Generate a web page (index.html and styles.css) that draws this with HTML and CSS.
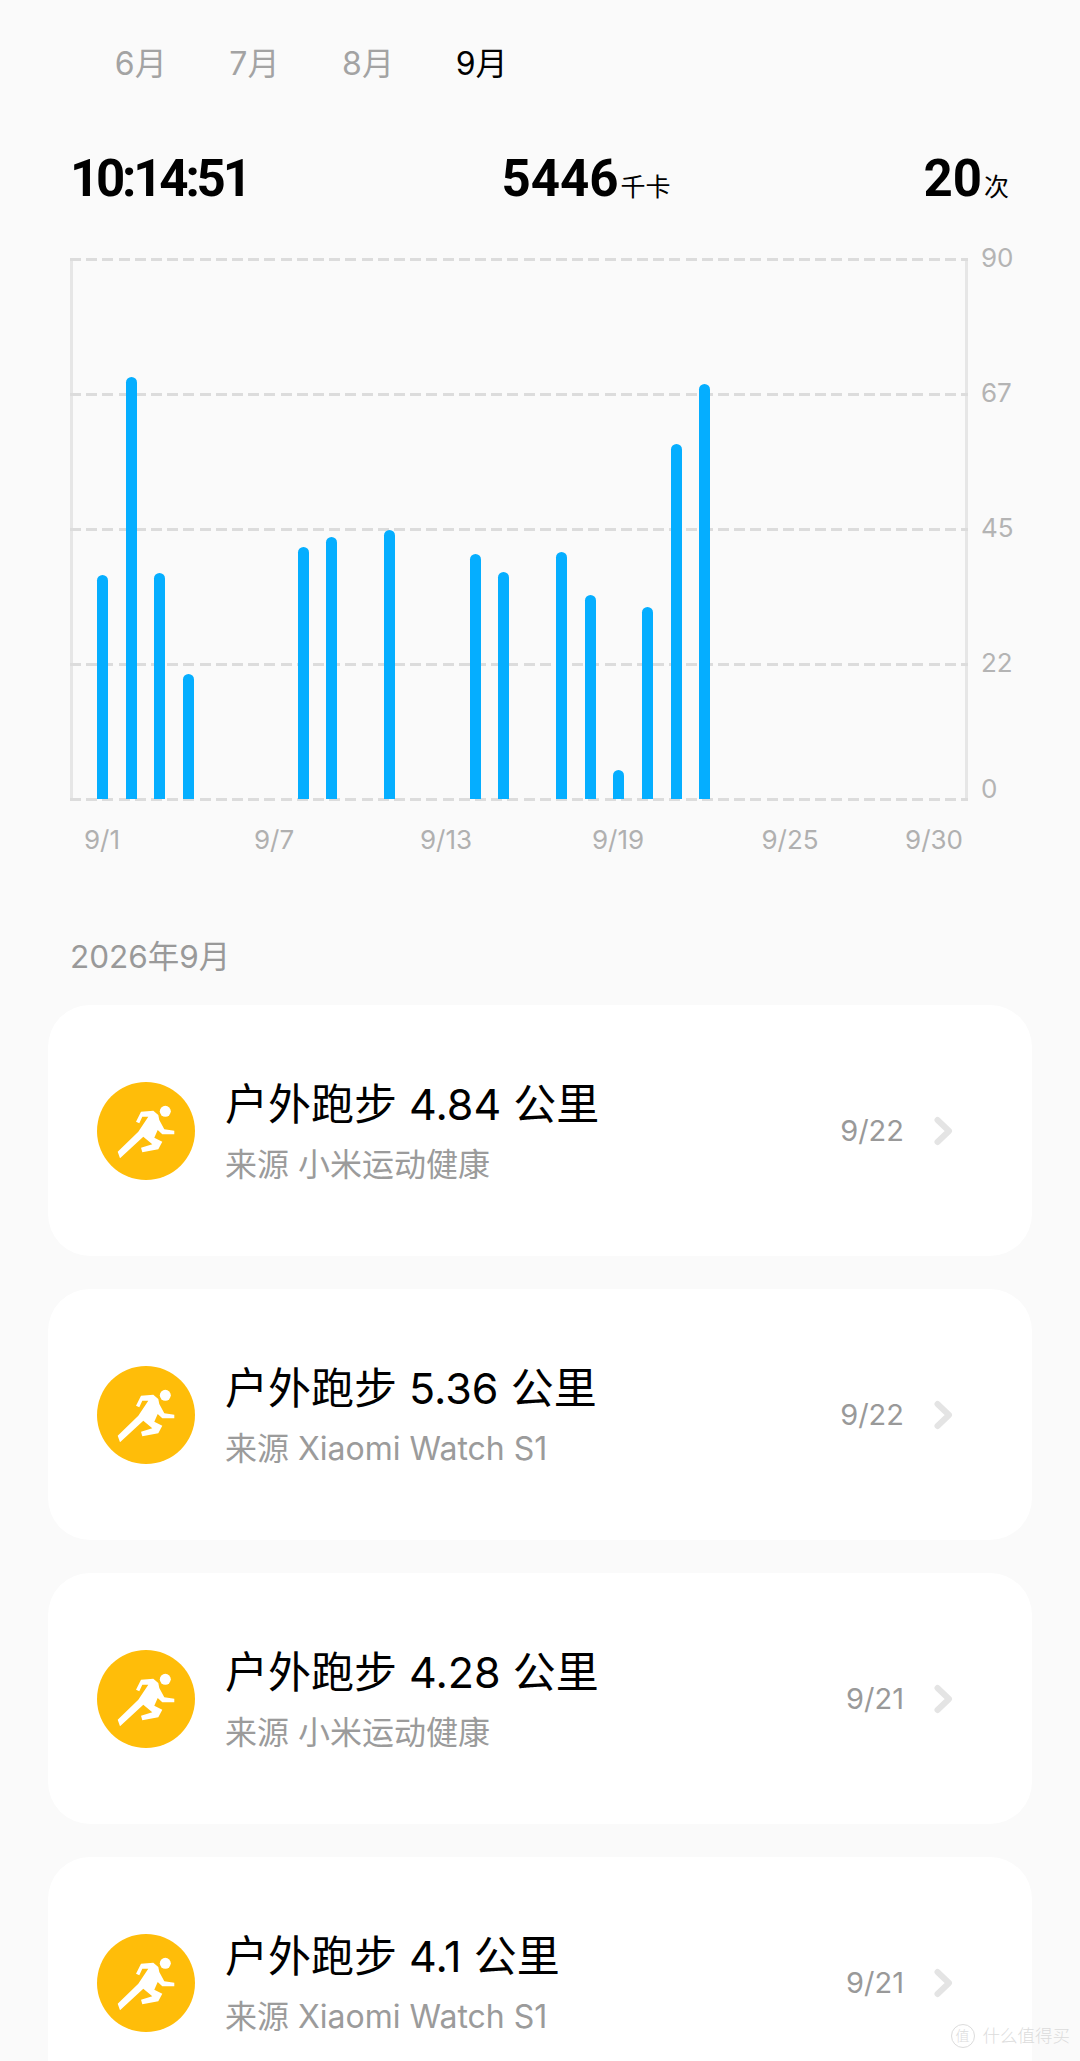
FILE: index.html
```html
<!DOCTYPE html>
<html lang="zh-CN">
<head>
    <meta charset="UTF-8">
    <meta name="viewport" content="width=device-width, initial-scale=1.0">
    <title>运动记录</title>
    <link rel="stylesheet" href="styles.css">
</head>
<body>
    <div class="page">
        <div class="tabs">
            <span class="tab">6月</span>
            <span class="tab">7月</span>
            <span class="tab">8月</span>
            <span class="tab active">9月</span>
        </div>

        <div class="totals">
            <div class="total"><b class="time">10:14:51</b></div>
            <div class="total"><b>5446</b><small>千卡</small></div>
            <div class="total"><b>20</b><small>次</small></div>
        </div>

        <div class="chart">
            <div class="plot">
                <div class="grid">
                    <i></i><i></i><i></i><i></i><i></i>
                </div>
                <div class="bars" id="bars"></div>
            </div>
            <div class="y-axis">
                <span>90</span><span>67</span><span>45</span><span>22</span><span class="zero">0</span>
            </div>
        </div>
        <div class="x-axis">
            <span style="left:32px">9/1</span>
            <span style="left:204px">9/7</span>
            <span style="left:376px">9/13</span>
            <span style="left:548px">9/19</span>
            <span style="left:720px">9/25</span>
            <span style="left:864px">9/30</span>
        </div>

        <h2 class="month">2026年9月</h2>

        <div class="list">
            <div class="card">
                <div class="badge">
                    <svg viewBox="0 0 98 98" width="98" height="98"><use href="#runner"/></svg>
                </div>
                <div class="info">
                    <div class="name">户外跑步 4.84 公里</div>
                    <div class="source">来源 小米运动健康</div>
                </div>
                <span class="date">9/22</span>
                <svg class="chevron" viewBox="0 0 20 30" width="20" height="30"><path d="M3.5 4L15 15 3.5 26"/></svg>
            </div>
            <div class="card">
                <div class="badge">
                    <svg viewBox="0 0 98 98" width="98" height="98"><use href="#runner"/></svg>
                </div>
                <div class="info">
                    <div class="name">户外跑步 5.36 公里</div>
                    <div class="source">来源 Xiaomi Watch S1</div>
                </div>
                <span class="date">9/22</span>
                <svg class="chevron" viewBox="0 0 20 30" width="20" height="30"><path d="M3.5 4L15 15 3.5 26"/></svg>
            </div>
            <div class="card">
                <div class="badge">
                    <svg viewBox="0 0 98 98" width="98" height="98"><use href="#runner"/></svg>
                </div>
                <div class="info">
                    <div class="name">户外跑步 4.28 公里</div>
                    <div class="source">来源 小米运动健康</div>
                </div>
                <span class="date">9/21</span>
                <svg class="chevron" viewBox="0 0 20 30" width="20" height="30"><path d="M3.5 4L15 15 3.5 26"/></svg>
            </div>
            <div class="card">
                <div class="badge">
                    <svg viewBox="0 0 98 98" width="98" height="98"><use href="#runner"/></svg>
                </div>
                <div class="info">
                    <div class="name">户外跑步 4.1 公里</div>
                    <div class="source">来源 Xiaomi Watch S1</div>
                </div>
                <span class="date">9/21</span>
                <svg class="chevron" viewBox="0 0 20 30" width="20" height="30"><path d="M3.5 4L15 15 3.5 26"/></svg>
            </div>
        </div>

        <div class="watermark"><span class="mark">值</span> 什么值得买</div>
    </div>

    <svg class="defs" width="0" height="0">
        <symbol id="runner" viewBox="0 0 98 98">
            <circle cx="68.3" cy="29.3" r="5.5" fill="#fff"/>
            <path fill="#fff" d="M39 39.7L44 29.7 56.3 28.7 61.3 33 62.3 38 67.3 47.3 77.3 48.7 77.3 52.3 65.3 52.3 60.7 48 57.3 55.7 65.3 59.7 61.3 67.3 45.3 70.3 44 65.7 55.3 62.3 46.3 54.7 23 76.3 20.7 69.7 41.3 49.7 51.3 34.7 45.3 34.7 42.3 41.3z"/>
        </symbol>
    </svg>

    <script>
        // day of month -> top of the bar in page px
        const tops = {1:575, 2:377, 3:573, 4:674, 8:547, 9:537, 11:530, 14:554, 15:572, 17:552, 18:595, 19:770, 20:607, 21:444, 22:384};
        const bars = document.getElementById('bars');
        for (let day = 1; day <= 30; day++) {
            const slot = document.createElement('div');
            slot.className = 'slot';
            if (tops[day]) {
                const bar = document.createElement('div');
                bar.className = 'bar';
                bar.style.height = (799 - tops[day]) + 'px';
                slot.appendChild(bar);
            }
            bars.appendChild(slot);
        }
    </script>
</body>
</html>
```
FILE: styles.css
```css
* {
    box-sizing: border-box;
}
html, body {
    margin: 0;
    height: 100%;
    overflow: hidden;
}
body {
    font-family: "Inter", "Noto Sans CJK SC", sans-serif;
    background-color: #fafafa;
    color: #000;
}
.page {
    position: relative;
    width: 1080px;
    height: 2061px;
    overflow: hidden;
}
.defs {
    position: absolute;
}

.tabs {
    display: flex;
    padding: 44px 0 0 84px;
    height: 130px;
}
.tab {
    width: 113.6px;
    text-align: center;
    font-size: 32px;
    line-height: 40px;
    height: 40px;
    color: #a3a3a3;
}
.tab.active {
    color: #000;
}

.totals {
    display: flex;
    justify-content: space-between;
    align-items: baseline;
    padding: 19px 71px 0 70px;
    height: 128px;
}
.total b {
    font-family: "Roboto", sans-serif;
    font-size: 51px;
    line-height: 60px;
    font-weight: 700;
}
.total .time {
    letter-spacing: -3.2px;
}
.total small {
    font-size: 25px;
    margin-left: 2px;
}

.chart {
    display: flex;
    padding-left: 70px;
}
.plot {
    position: relative;
    width: 898px;
    height: 543px;
    border-left: 3px solid #e6e6e6;
    border-right: 3px solid #e6e6e6;
}
.grid {
    position: absolute;
    inset: 0 -3px;
    display: flex;
    flex-direction: column;
    justify-content: space-between;
}
.grid i {
    display: block;
    height: 3px;
    background: repeating-linear-gradient(to right, #dcdcdc 0 11px, transparent 11px 16.2px);
}
.bars {
    position: absolute;
    left: 15px;
    bottom: 2px;
    height: 540px;
    display: flex;
    align-items: flex-end;
}
.slot {
    width: 28.7px;
    display: flex;
    justify-content: center;
}
.bar {
    width: 11px;
    background: #05aeff;
    border-radius: 6px 6px 0 0;
}
.y-axis {
    width: 60px;
    display: flex;
    flex-direction: column;
    gap: 105px;
    font-size: 26px;
    line-height: 30px;
    color: #b4b4b4;
    padding-left: 13px;
    margin-top: -15px;
}
.y-axis .zero {
    margin-top: -9px;
}

.x-axis {
    position: relative;
    height: 46px;
    margin-top: 19px;
    margin-left: 70px;
    font-size: 26px;
    line-height: 34px;
    color: #b0b0b0;
}
.x-axis span {
    position: absolute;
    top: 0;
    transform: translateX(-50%);
}

.month {
    margin: 0;
    padding: 68px 0 0 70px;
    height: 136px;
    font-size: 31.5px;
    line-height: 40px;
    font-weight: 400;
    color: #999;
}

.list {
    display: flex;
    flex-direction: column;
    gap: 33px;
    margin: 0 48px;
}
.card {
    flex: none;
    height: 251px;
    display: flex;
    align-items: center;
    padding: 0 78px 0 49px;
    background: #fff;
    border-radius: 42px;
}
.badge {
    flex: none;
    width: 98px;
    height: 98px;
    border-radius: 50%;
    background: #ffbd09;
}
.badge svg {
    display: block;
}
.info {
    flex: 1;
    margin-left: 30px;
}
.name {
    font-size: 43px;
    line-height: 56px;
    color: #000;
}
.source {
    font-size: 32px;
    line-height: 42px;
    margin-top: 12px;
    color: #9b9b9b;
}
.date {
    font-size: 29px;
    color: #999;
    margin-right: 30px;
}
.chevron {
    flex: none;
    fill: none;
    stroke: #e4e4e4;
    stroke-width: 6;
    stroke-linecap: round;
    stroke-linejoin: round;
}

.watermark {
    position: absolute;
    right: 10px;
    bottom: 13px;
    display: flex;
    align-items: center;
    gap: 8px;
    font-size: 17.5px;
    line-height: 24px;
    font-weight: 300;
    color: #dcdcdc;
}
.mark {
    display: block;
    border: 1px solid #dcdcdc;
    border-radius: 50%;
    font-size: 14px;
    line-height: 22px;
    width: 24px;
    height: 24px;
    text-align: center;
}
```
